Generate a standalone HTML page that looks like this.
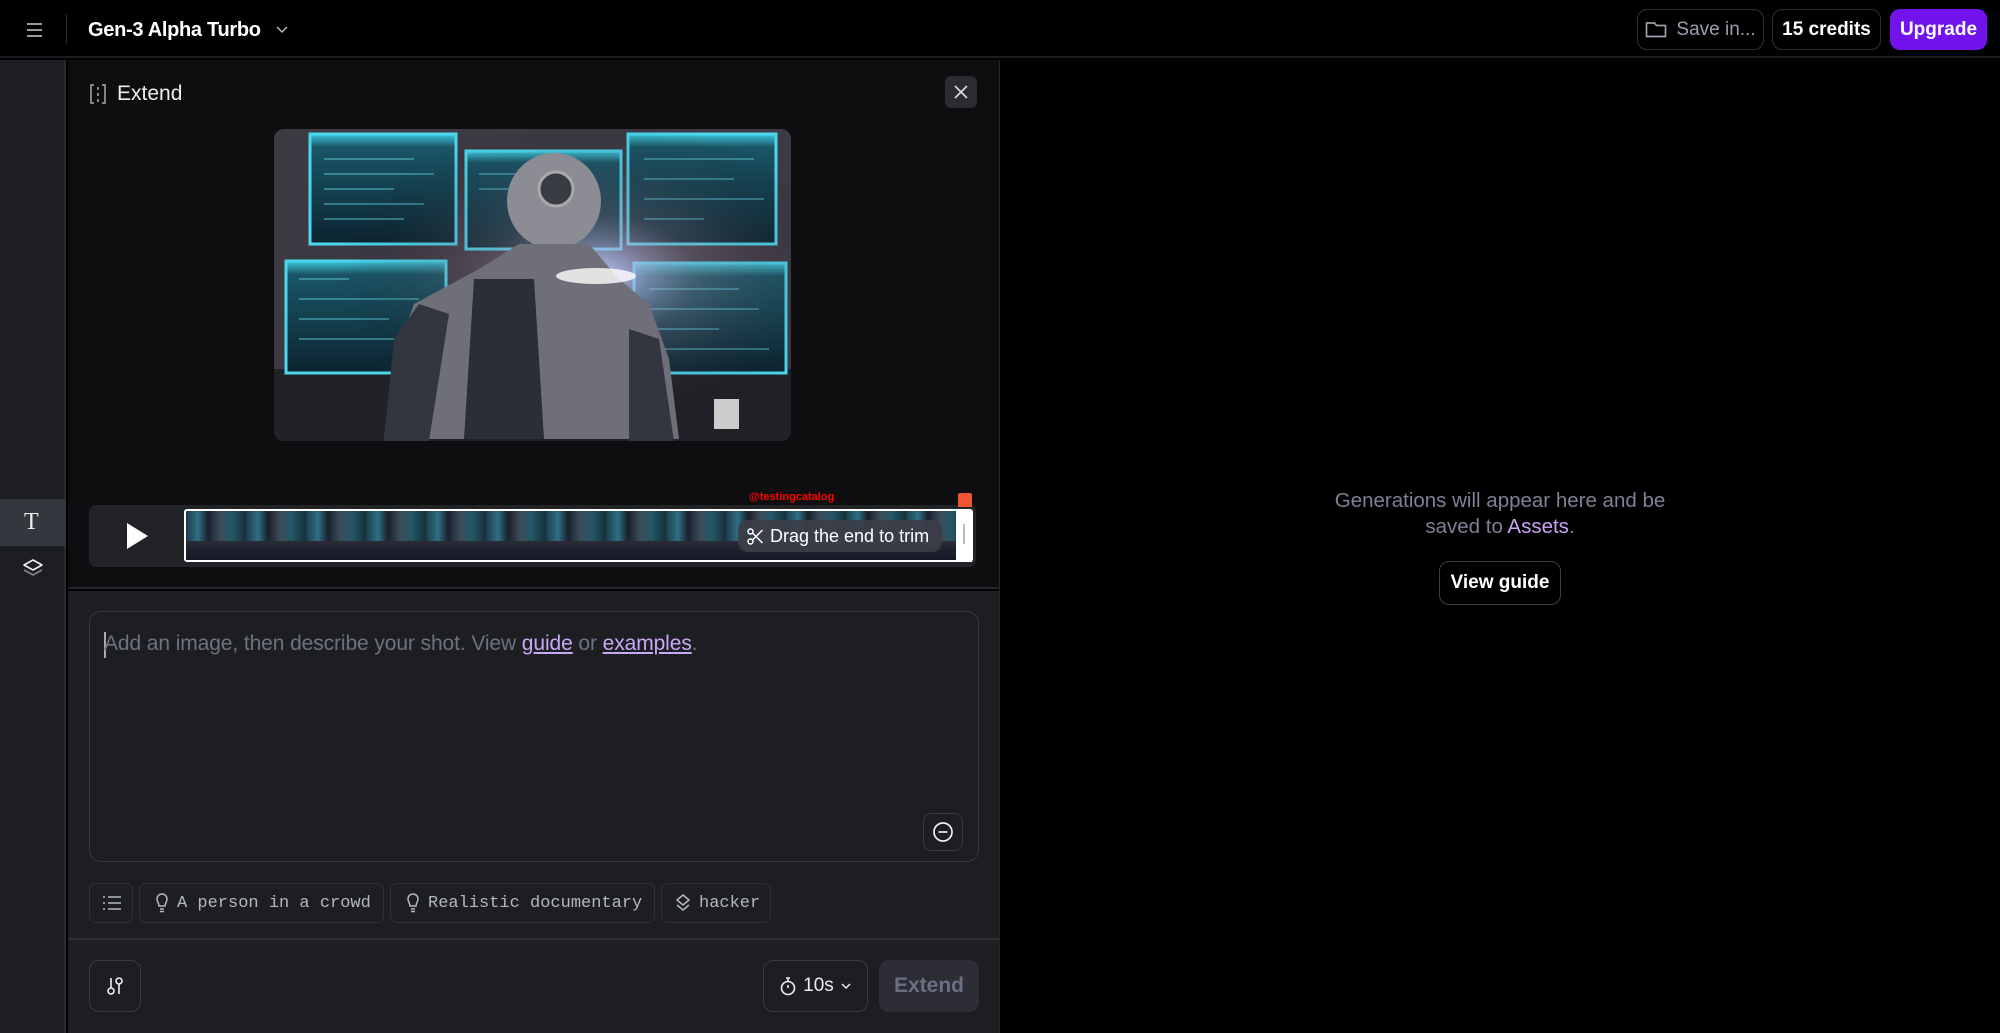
<!DOCTYPE html>
<html><head><meta charset="utf-8"><style>
*{box-sizing:border-box;margin:0;padding:0}
body{width:2000px;height:1033px;background:#000;font-family:"Liberation Sans",sans-serif;position:relative;overflow:hidden;color:#fff}
.a{position:absolute}
.btn{position:absolute;border:1.5px solid #2e2f35;border-radius:10px;display:flex;align-items:center;justify-content:center}
.chip{position:absolute;top:883px;height:40px;border:1.5px solid #2e3036;border-radius:7px;display:flex;align-items:center;font-family:"Liberation Mono",monospace;font-size:17px;color:#b4b7c2;padding-left:16px}
</style></head><body>
<!-- header -->
<div class="a" style="left:0;top:0;width:2000px;height:58px;background:#000;border-bottom:2px solid #1b1c20"></div>
<svg class="a" style="left:26px;top:22px" width="17" height="16" viewBox="0 0 17 16"><path d="M1 2h15M1 8h15M1 14h15" stroke="#aeb0b8" stroke-width="1.8"/></svg>
<div class="a" style="left:66px;top:14px;width:1px;height:30px;background:#2a2b30"></div>
<div class="a" style="left:88px;top:19px;font-size:20px;font-weight:600;letter-spacing:-0.3px">Gen-3 Alpha Turbo</div>
<svg class="a" style="left:276px;top:26px" width="12" height="8" viewBox="0 0 12 8"><path d="M1 1l5 5 5-5" stroke="#bbb" fill="none" stroke-width="1.5"/></svg>
<div class="btn" style="left:1637px;top:9px;width:127px;height:41px;color:#9a9fae;font-size:19px"><svg width="22" height="18" viewBox="0 0 22 18" style="margin-right:9px"><path d="M1.5 3v12.5h19V4.5h-9l-2-2.5h-8z" stroke="#9a9fae" fill="none" stroke-width="1.7" stroke-linejoin="round"/></svg>Save in...</div>
<div class="btn" style="left:1772px;top:9px;width:109px;height:41px;font-size:19px;font-weight:600">15 credits</div>
<div class="a" style="left:1890px;top:9px;width:97px;height:41px;background:#7213ee;border-radius:10px;display:flex;align-items:center;justify-content:center;font-size:19px;font-weight:600">Upgrade</div>
<!-- sidebar -->
<div class="a" style="left:0;top:60px;width:66px;height:973px;background:#1d1e22;border-right:2px solid #2a2b30"></div>
<div class="a" style="left:0;top:499px;width:66px;height:47px;background:#35373e"></div>
<div class="a" style="left:24px;top:509px;font-family:'Liberation Serif',serif;font-size:24px;color:#eee">T</div>
<svg class="a" style="left:22px;top:558px" width="22" height="22" viewBox="0 0 22 22"><path d="M11 2l9 5-9 5-9-5z" stroke="#eee" fill="none" stroke-width="1.6" stroke-linejoin="round"/><path d="M2 12l9 5 9-5" stroke="#888" fill="none" stroke-width="1.6"/></svg>
<!-- left panel -->
<div class="a" style="left:68px;top:60px;width:931px;height:529px;background:#0e0e10;border-bottom:2px solid #26272c"></div>
<div class="a" style="left:68px;top:591px;width:931px;height:442px;background:#1d1e22"></div>
<div class="a" style="left:999px;top:60px;width:1px;height:973px;background:#26272c"></div>
<svg class="a" style="left:89px;top:84px" width="18" height="20" viewBox="0 0 18 20"><path d="M5 1H2v18h3M13 1h3v18h-3M9 3v3M9 9v3M9 15v3" stroke="#aaa" fill="none" stroke-width="1.5"/></svg>
<div class="a" style="left:117px;top:82px;font-size:21px;color:#eee">Extend</div>
<div class="a" style="left:945px;top:76px;width:32px;height:32px;background:#2b2c31;border-radius:6px"></div>
<svg class="a" style="left:954px;top:85px" width="14" height="14" viewBox="0 0 14 14"><path d="M1 1l12 12M13 1L1 13" stroke="#ddd" stroke-width="1.6"/></svg>
<!-- image -->
<svg class="a" style="left:274px;top:129px;border-radius:10px" width="517" height="312" viewBox="0 0 517 312">
<defs><radialGradient id="g" cx="0.62" cy="0.47" r="0.5"><stop offset="0" stop-color="#fff"/><stop offset="0.08" stop-color="#b9c8ff" stop-opacity=".8"/><stop offset="0.4" stop-color="#8a7c90" stop-opacity=".3"/><stop offset="1" stop-color="#000" stop-opacity="0"/></radialGradient>
<linearGradient id="s" x1="0" y1="0" x2="0" y2="1"><stop offset="0" stop-color="#3fc8dc"/><stop offset="0.12" stop-color="#1a5566"/><stop offset="1" stop-color="#0c2430"/></linearGradient></defs>
<rect width="517" height="312" fill="#3e3a44"/>
<rect y="240" width="517" height="72" fill="#222128"/>
<g stroke="#4ad8ef" stroke-width="3" fill="url(#s)">
<rect x="36" y="5" width="146" height="110"/><rect x="192" y="22" width="155" height="98"/><rect x="354" y="5" width="148" height="110"/>
<rect x="12" y="132" width="160" height="112"/><rect x="360" y="134" width="152" height="110"/></g>
<g stroke="#5fd0e0" stroke-width="1.5" opacity=".6"><path d="M50 30h90M50 45h110M50 60h70M50 75h100M50 90h80M205 45h60M205 60h90M370 30h110M370 50h90M370 70h120M370 90h60M25 150h50M25 170h120M25 190h90M25 210h130M375 160h90M375 180h110M375 200h70M375 220h120"/></g>
<rect width="517" height="312" fill="url(#g)"/>
<ellipse cx="280" cy="72" rx="47" ry="48" fill="#8c8d94"/>
<circle cx="282" cy="60" r="17" fill="#3a3c44" stroke="#aaa" stroke-width="3"/>
<path d="M205 140l40-25h70l30 35 30 25 20 55 10 80H110l10-80 20-55z" fill="#6e6f78"/>
<path d="M200 150h60l10 160h-80z" fill="#2c2e36"/>
<path d="M120 210l25-35 30 10-20 127h-45zM355 200l30 10 15 102h-45z" fill="#333540"/>
<ellipse cx="322" cy="147" rx="40" ry="8" fill="#fff" opacity=".8"/>
<rect x="440" y="270" width="25" height="30" fill="#ccc"/>
</svg>
<!-- timeline -->
<div class="a" style="left:89px;top:505px;width:887px;height:62px;background:#222327;border-radius:7px"></div>
<svg class="a" style="left:124px;top:521px" width="26" height="30" viewBox="0 0 26 30"><path d="M3 2l21 13-21 13z" fill="#fff"/></svg>
<div class="a" style="left:184px;top:509px;width:789px;height:53px;border:2px solid #fff;border-radius:3px;background:repeating-linear-gradient(90deg,#1b3d4c 0,#2f6f84 12px,#18212c 22px,#3d4c5a 34px,#235766 46px,#1a2e3a 60px);overflow:hidden">
<div style="position:absolute;left:0;top:30px;width:100%;height:21px;background:linear-gradient(#2a2c38,#111520)"></div></div>
<div class="a" style="left:956px;top:510px;width:16px;height:52px;background:#fff"><div style="margin:14px 0 0 7px;width:2px;height:20px;background:#bbb"></div></div>
<div class="a" style="left:958px;top:493px;width:14px;height:14px;background:#ee5533;border-radius:2px 2px 0 0"></div>
<div class="a" style="left:749px;top:491px;font-size:11px;font-weight:700;color:#f00">@testingcatalog</div>
<div class="a" style="left:738px;top:520px;width:204px;height:32px;background:rgba(60,62,72,.92);border-radius:10px;display:flex;align-items:center;padding-left:9px;font-size:18px;color:#fff">
<svg width="16" height="17" viewBox="0 0 16 17" style="margin-right:7px"><circle cx="3.5" cy="3.5" r="2.5" stroke="#fff" fill="none" stroke-width="1.5"/><circle cx="3.5" cy="13.5" r="2.5" stroke="#fff" fill="none" stroke-width="1.5"/><path d="M5.5 5l10 10M5.5 12l10-10" stroke="#fff" stroke-width="1.5"/></svg>Drag the end to trim</div>
<!-- prompt -->
<div class="a" style="left:89px;top:611px;width:890px;height:251px;border:1.5px solid #393a41;border-radius:12px;background:#1d1e22"></div>
<div class="a" style="left:104px;top:632px;width:1.5px;height:26px;background:#aaa"></div>
<div class="a" style="left:104px;top:632px;font-size:21px;color:#6e7181;letter-spacing:-0.1px">Add an image, then describe your shot. View <span style="color:#c9a9f5;text-decoration:underline">guide</span> or <span style="color:#c9a9f5;text-decoration:underline">examples</span>.</div>
<div class="btn" style="left:923px;top:813px;width:40px;height:38px;border-color:#3a3b42;border-radius:8px"><svg width="22" height="22" viewBox="0 0 22 22"><circle cx="11" cy="11" r="9" stroke="#eee" fill="none" stroke-width="1.7"/><path d="M6.5 11h9" stroke="#eee" stroke-width="1.7"/></svg></div>
<!-- chips -->
<div class="chip" style="left:89px;width:44px;padding-left:12px"><svg width="20" height="16" viewBox="0 0 20 16"><path d="M6 2h13M6 8h13M6 14h13M1 2h2M1 8h2M1 14h2" stroke="#b4b7c2" stroke-width="1.6"/></svg></div>
<div class="chip" style="left:139px;width:245px"><svg width="12" height="20" viewBox="0 0 12 20" style="margin-right:9px"><path d="M3 13c0-3-2-4-2-7a5 5 0 0110 0c0 3-2 4-2 7zM4 16h4M4 18.5h4" stroke="#b4b7c2" fill="none" stroke-width="1.5"/></svg>A person in a crowd</div>
<div class="chip" style="left:390px;width:265px"><svg width="12" height="20" viewBox="0 0 12 20" style="margin-right:9px"><path d="M3 13c0-3-2-4-2-7a5 5 0 0110 0c0 3-2 4-2 7zM4 16h4M4 18.5h4" stroke="#b4b7c2" fill="none" stroke-width="1.5"/></svg>Realistic documentary</div>
<div class="chip" style="left:661px;width:110px;padding-left:13px"><svg width="16" height="18" viewBox="0 0 16 18" style="margin-right:8px"><path d="M8 1l6 5-6 5-6-5z" stroke="#b4b7c2" fill="none" stroke-width="1.5"/><path d="M2 11l6 5 6-5" stroke="#b4b7c2" fill="none" stroke-width="1.5"/></svg>hacker</div>
<div class="a" style="left:68px;top:938px;width:931px;height:2px;background:#2f3035"></div>
<!-- bottom -->
<div class="btn" style="left:89px;top:960px;width:52px;height:52px;border-color:#3a3b42"><svg width="18" height="20" viewBox="0 0 18 20"><path d="M5 2v10" stroke="#eee" stroke-width="1.6"/><circle cx="5" cy="15" r="3" stroke="#eee" fill="none" stroke-width="1.6"/><circle cx="13" cy="5" r="3" stroke="#eee" fill="none" stroke-width="1.6"/><path d="M13 8v10" stroke="#eee" stroke-width="1.6"/></svg></div>
<div class="btn" style="left:763px;top:960px;width:105px;height:52px;border-color:#3a3b42;font-size:19px;color:#eee"><svg width="16" height="20" viewBox="0 0 16 20" style="margin-right:7px"><circle cx="8" cy="12" r="6.5" stroke="#eee" fill="none" stroke-width="1.6"/><path d="M6 2h4M8 2v4M8 12V9" stroke="#eee" stroke-width="1.6"/></svg>10s<svg width="10" height="7" viewBox="0 0 10 7" style="margin-left:7px"><path d="M1 1l4 4 4-4" stroke="#eee" fill="none" stroke-width="1.5"/></svg></div>
<div class="a" style="left:879px;top:960px;width:100px;height:52px;background:#2c2d35;border-radius:10px;display:flex;align-items:center;justify-content:center;font-size:21px;font-weight:600;color:#6c6f82">Extend</div>
<!-- right -->
<div class="a" style="left:1300px;top:488px;width:400px;text-align:center;font-size:20.5px;line-height:26px;color:#7c8195">Generations will appear here and be<br>saved to <span style="color:#c9a3f5">Assets</span>.</div>
<div class="btn" style="left:1439px;top:561px;width:122px;height:44px;border-color:#3c3d44;font-size:19px;font-weight:600">View guide</div>
</body></html>
